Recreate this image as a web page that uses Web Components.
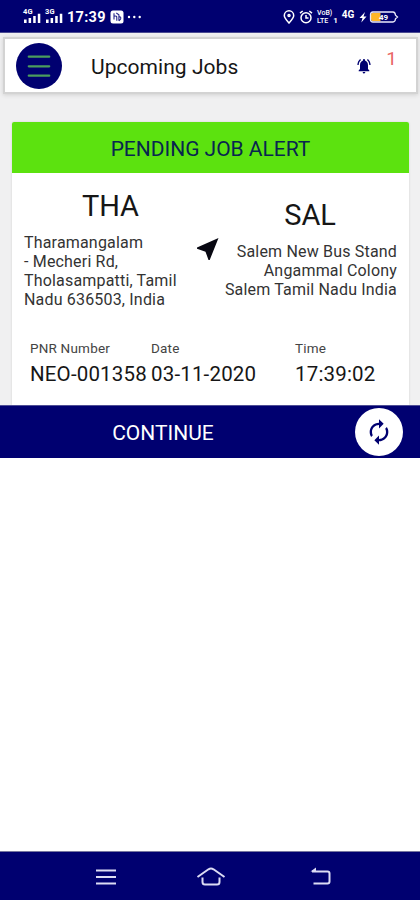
<!DOCTYPE html>
<html lang="en">
<head>
<meta charset="utf-8">
<title>Upcoming Jobs</title>
<style>
    html, body {
        margin: 0;
        height: 100%;
        background: #fff;
    }
    body {
        font-family: Roboto, "Liberation Sans", sans-serif;
        color: #161616;
        --navy: #000070;
        --green: #5ce20f;
        --muted: #dcdcf4;
    }
</style>
</head>
<body>
<job-app></job-app>

<script>
    function define(name, html) {
        const template = document.createElement('template');
        template.innerHTML = html;
        customElements.define(name, class extends HTMLElement {
            constructor() {
                super();
                this.attachShadow({ mode: 'open' }).appendChild(template.content.cloneNode(true));
            }
        });
    }

    // Mobile signal: network label over four bars
    define('signal-icon', `
        <style>
            :host { display: flex; flex-direction: column; width: 19px; height: 15px; color: #fff; }
            span { font-size: 7.5px; line-height: 6px; font-weight: 700; letter-spacing: 0.3px; height: 5px; }
            svg { display: block; margin-top: -1px; }
        </style>
        <span><slot></slot></span>
        <svg width="19" height="10" viewBox="0 0 19 10" fill="#fff">
            <path d="M1 6.5h2.6V10H1zM5.6 5h2.5v5H5.6zM10.2 3h2.5v7h-2.5zM14.8.8h2.5V10h-2.5z"/>
        </svg>
    `);

    define('status-bar', `
        <style>
            :host {
                display: flex;
                align-items: center;
                justify-content: space-between;
                box-sizing: border-box;
                height: 33px;
                padding: 1px 21px 0 23px;
                background: var(--navy);
                border-bottom: 1px solid #4a4a92;
                color: #fff;
            }
            div { display: flex; align-items: center; }
            svg { display: block; }
            .left { gap: 3px; }
            .time { font-size: 14.5px; font-weight: 700; letter-spacing: 0.3px; margin: 1px 2px 0 0; }
            .badge { margin-right: -2px; margin-left: -1px; }
            .right { gap: 4px; }
            .volte { display: grid; font-size: 7px; line-height: 8px; font-weight: 500; letter-spacing: 0; }
            .one { align-self: flex-end; font-size: 8px; line-height: 8px; margin-left: -3px; font-weight: 700; }
            .net { font-size: 10px; line-height: 10px; font-weight: 700; letter-spacing: -0.2px; margin: -3px 1px 0 0; }
        </style>
        <div class="left">
            <signal-icon>4G</signal-icon>
            <signal-icon>3G</signal-icon>
            <span class="time">17:39</span>
            <svg class="badge" width="14" height="14" viewBox="0 0 14 14">
                <rect x=".5" y=".5" width="13" height="13" rx="2.5" fill="#fff"/>
                <path d="M4 3.2v6.2M4 6.3c2-.8 3 0 2.8 1.500v3M6.300 3l2.600 1.700v6M9 7c1.800-.4 2 .5 1.600 2L9 11" fill="none" stroke="#26268a" stroke-width="1.1"/>
            </svg>
            <svg width="18" height="4" viewBox="0 0 18 4" fill="#fff">
                <circle cx="4" cy="2" r="1.2"/><circle cx="9.3" cy="2" r="1.2"/><circle cx="14.7" cy="2" r="1.2"/>
            </svg>
        </div>
        <div class="right">
            <svg width="12" height="14" viewBox="0 0 12 14" fill="none" stroke="#fff" stroke-width="1.5">
                <path d="M6 13C3.500 10.200 1.300 8 1.300 5.500a4.700 4.700 0 0 1 9.400 0C10.700 8 8.500 10.200 6 13z"/>
                <circle cx="6" cy="5.500" r="1"/>
            </svg>
            <svg width="14" height="14" viewBox="0 0 14 14" fill="none" stroke="#fff" stroke-width="1.500">
                <circle cx="7" cy="7.700" r="5"/>
                <path d="M7 5v3h2.500M1 3.200 3.700 1M13 3.200 10.300 1"/>
            </svg>
            <span class="volte"><span>VoB)</span><span>LTE</span></span>
            <span class="one">1</span>
            <span class="net">4G</span>
            <svg width="40" height="14" viewBox="0 0 40 14">
                <path d="M6 2 .5 8h3L2.300 12.500 7.500 6.500h-3z" fill="#fff"/>
                <path d="M14 2.800h7.500v8.500H14a2 2 0 0 1-2-2V4.800a2 2 0 0 1 2-2z" fill="#ffb629"/>
                <path d="M14 2h20q2.200 0 2.500 3.200L38.500 7l-2 1.800q-.3 3.200-2.500 3.200H14q-2.500 0-2.500-2.500v-5Q11.500 2 14 2z" fill="none" stroke="#e9e9fa" stroke-width="1.300"/>
                <text x="20" y="10" font-size="8" font-weight="700" fill="#fff">49</text>
            </svg>
        </div>
    `);

    define('menu-button', `
        <style>
            :host {
                display: grid;
                place-items: center;
                width: 46px;
                height: 46px;
                border-radius: 50%;
                background: var(--navy);
            }
        </style>
        <svg width="24" height="24" viewBox="0 0 24 24" stroke="#4b9c5d" stroke-width="2.300" stroke-linecap="round">
            <path d="M1.800 2.700h20.400M1.800 12.300h20.400M1.800 21.700h20.400"/>
        </svg>
    `);

    define('app-header', `
        <style>
            :host {
                display: flex;
                align-items: center;
                box-sizing: border-box;
                height: 53px;
                margin: 6px 4px 0 5px;
                padding: 0 19px 0 11px;
                background: #fff;
                box-shadow: 0 0 0 2px #d3d3d3, 0 1px 4px 2px #d0d0d0;
            }
            h1 { margin: 2px 0 0 29px; flex: 1; font-size: 21px; font-weight: 400; letter-spacing: 0.05px; }
            svg { display: block; margin-right: 14px; }
            .count { align-self: flex-start; margin-top: 9px; font-size: 19px; line-height: 22px; color: #e96666; }
        </style>
        <menu-button></menu-button>
        <h1><slot></slot></h1>
        <svg width="16" height="18" viewBox="0 0 24 24" preserveAspectRatio="none" fill="#000070">
            <path d="M7.580 4.080 6.150 2.650C3.750 4.480 2.170 7.300 2.030 10.500h2c.15-2.650 1.510-4.970 3.550-6.420zm12.390 6.420h2c-.15-3.200-1.730-6.020-4.120-7.850l-1.420 1.430c2.020 1.450 3.390 3.770 3.540 6.420zM18 11c0-3.070-1.640-5.640-4.500-6.320V4c0-.83-.67-1.500-1.500-1.500s-1.500.67-1.500 1.500v.68C7.630 5.360 6 7.920 6 11v5l-2 2v1h16v-1l-2-2v-5zm-6 11c.14 0 .27-.01.4-.04.65-.14 1.180-.58 1.440-1.180.1-.24.15-.5.15-.78h-4c.01 1.100.9 2 2.010 2z"/>
        </svg>
        <span class="count">1</span>
    `);

    define('job-stop', `
        <style>
            :host { display: block; font-size: 16px; line-height: 19px; color: #333; letter-spacing: 0.18px; }
            h2 { margin: 0 0 10px; font-size: 29px; line-height: 34px; font-weight: 400; color: #161616; text-align: center; letter-spacing: -0.1px; }
            ::slotted(div) { white-space: nowrap; }
        </style>
        <h2><slot name="code"></slot></h2>
        <slot></slot>
    `);

    define('job-field', `
        <style>
            :host { display: block; white-space: nowrap; }
            dt { font-size: 13.5px; line-height: 16px; color: #444; letter-spacing: 0.2px; }
            dd { margin: 4px 0 0; font-size: 20.5px; line-height: 28px; letter-spacing: 0.17px; }
        </style>
        <dt><slot name="label"></slot></dt>
        <dd><slot></slot></dd>
    `);

    define('job-card', `
        <style>
            :host {
                display: block;
                height: 283px;
                margin: 30px 11px 0 12px;
                background: #fff;
                border-radius: 2px 2px 0 0;
                box-shadow: 0 0 2px #c8c8c8;
            }
            header {
                height: 51px;
                line-height: 54px;
                border-radius: 2px 2px 0 0;
                background: var(--green);
                color: #08264f;
                text-align: center;
                font-size: 21px;
                letter-spacing: -0.02px;
            }
            .route { display: grid; grid-template-columns: 173px 24px 1fr; height: 168px; padding: 0 12px; box-sizing: border-box; }
            .from { padding-top: 16px; }
            .to { padding-top: 25px; text-align: right; }
            .to span { padding-left: 2px; }
            .arrow { margin: 64px 0 0 -1px; }
            .fields { display: grid; grid-template-columns: 121px 144px 1fr; padding-left: 18px; margin-top: -1px; }
        </style>
        <header>PENDING JOB ALERT</header>
        <div class="route">
            <job-stop class="from">
                <span slot="code">THA</span>
                <div>Tharamangalam</div>
                <div>- Mecheri Rd,</div>
                <div>Tholasampatti, Tamil</div>
                <div>Nadu 636503, India</div>
            </job-stop>
            <svg class="arrow" width="24" height="24" viewBox="0 0 24 24">
                <path d="M22.500 1 1 10.500v1.200l8.500 3 3 8.300h1.200z" fill="#080812"/>
            </svg>
            <job-stop class="to">
                <span slot="code">SAL</span>
                <div>Salem New Bus Stand</div>
                <div>Angammal Colony</div>
                <div>Salem Tamil Nadu India</div>
            </job-stop>
        </div>
        <div class="fields">
            <job-field><span slot="label">PNR Number</span>NEO-001358</job-field>
            <job-field><span slot="label">Date</span>03-11-2020</job-field>
            <job-field><span slot="label">Time</span>17:39:02</job-field>
        </div>
    `);

    define('action-bar', `
        <style>
            :host {
                display: flex;
                align-items: center;
                box-sizing: border-box;
                height: 53px;
                padding: 0 17px 1px 0;
                background: var(--navy);
                border-top: 1px solid #4e4e95;
                color: #fff;
            }
            .label { flex: 1; padding-right: 29px; text-align: center; font-size: 21px; line-height: 28px; margin-top: 3px; }
            .refresh { display: grid; place-items: center; width: 48px; height: 48px; border-radius: 50%; background: #fff; }
        </style>
        <span class="label"><slot></slot></span>
        <span class="refresh">
            <svg width="28" height="28" viewBox="0 0 24 24" fill="#000070">
                <path d="M12 6v3l4-4-4-4v3c-4.420 0-8 3.580-8 8 0 1.570.46 3.030 1.240 4.260L6.700 14.800c-.45-.83-.7-1.790-.7-2.800 0-3.310 2.690-6 6-6zm6.760 1.740L17.300 9.200c.44.84.7 1.790.7 2.800 0 3.310-2.690 6-6 6v-3l-4 4 4 4v-3c4.420 0 8-3.580 8-8 0-1.570-.46-3.030-1.240-4.260z"/>
            </svg>
        </span>
    `);

    define('nav-bar', `
        <style>
            :host {
                display: flex;
                align-items: center;
                box-sizing: border-box;
                height: 49px;
                padding: 1px 0 0 93px;
                background: var(--navy);
                border-top: 1px solid #77779f;
            }
            svg { fill: none; stroke: var(--muted); stroke-width: 2; }
            .home { margin: 0 82px 0 77px; }
        </style>
        <svg width="26" height="24" viewBox="0 0 26 24"><path d="M3 5.500h20M3 12h20M3 18.500h20"/></svg>
        <svg class="home" width="30" height="24" viewBox="0 0 30 24"><path d="M1.500 12 12.500 4.300q2.500-1.500 5 0L28.500 12M6.500 12.500V17q0 2.500 2.500 2.500h12q2.500 0 2.500-2.500v-4.500"/></svg>
        <svg width="26" height="24" viewBox="0 0 26 24"><path d="M4 6.500h15.500q2 0 2 2v8q0 2-2 2H5.500"/><path d="M8 2.500v4H2.500z" fill="#dcdcf4" stroke="none"/></svg>
    `);

    define('job-app', `
        <style>
            :host { display: flex; flex-direction: column; height: 900px; overflow: hidden; }
            main { height: 372px; background: #f0f0f1; display: flow-root; }
            .space { flex: 1; }
        </style>
        <status-bar></status-bar>
        <main>
            <app-header>Upcoming Jobs</app-header>
            <job-card></job-card>
        </main>
        <action-bar>CONTINUE</action-bar>
        <div class="space"></div>
        <nav-bar></nav-bar>
    `);
</script>
</body>
</html>
